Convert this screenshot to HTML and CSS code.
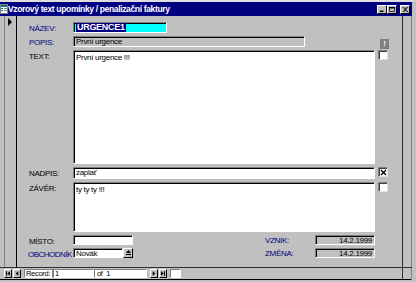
FILE: index.html
```html
<!DOCTYPE html>
<html lang="cs">
<head>
    <meta charset="UTF-8">
    <title>Vzorový text upomínky / penalizační faktury</title>
    <link rel="stylesheet" href="styles.css">
</head>
<body>
    <div class="window">
        <div class="titlebar">
            <svg class="app-icon" width="8" height="10" viewBox="0 0 8 10">
                <rect x="0.5" y="0.5" width="7" height="9" fill="#fff" stroke="#808080"/>
                <rect x="1" y="1" width="6" height="2" fill="#008080"/>
                <rect x="1" y="4" width="2" height="1" fill="#008080"/>
                <rect x="4" y="4" width="3" height="1" fill="#808080"/>
                <rect x="1" y="6" width="2" height="1" fill="#008080"/>
                <rect x="4" y="6" width="3" height="1" fill="#808080"/>
            </svg>
            <span class="title">Vzorový text upomínky / penalizační faktury</span>
            <div class="caption-buttons">
                <span class="cap-btn">
                    <svg width="8" height="7" viewBox="0 0 8 7"><rect x="1" y="5" width="5" height="2" fill="#000"/></svg>
                </span>
                <span class="cap-btn">
                    <svg width="8" height="7" viewBox="0 0 8 7"><rect x="0.5" y="0.5" width="7" height="6" fill="none" stroke="#000"/><rect x="0" y="0" width="8" height="2" fill="#000"/></svg>
                </span>
                <span class="cap-btn close">
                    <svg width="8" height="7" viewBox="0 0 8 7"><path d="M1 0 L7 7 M7 0 L1 7 M2 0 L8 7 M8 0 L2 7" stroke="#000" stroke-width="1"/></svg>
                </span>
            </div>
        </div>

        <div class="client">
            <div class="form-row">
                <div class="selector">
                    <div class="selector-col"><span class="current-record"></span></div>
                </div>

                <div class="detail">
                    <span class="label blue">NÁZEV:</span>
                    <div class="field"><div class="box cyan name-box"><span class="selected">URGENCE1</span></div></div>
                    <span class="extra"></span>

                    <span class="label blue">POPIS:</span>
                    <div class="field"><div class="box locked popis-box">První urgence</div></div>
                    <span class="extra"><span class="warn-btn">!</span></span>

                    <span class="label">TEXT:</span>
                    <div class="field"><div class="box tall">První urgence !!!</div></div>
                    <span class="extra"><span class="check"></span></span>

                    <span class="label">NADPIS:</span>
                    <div class="field"><div class="box">zaplať</div></div>
                    <span class="extra">
                        <span class="check">
                            <svg width="7" height="7" viewBox="0 0 7 7"><path d="M1 1 L6 6 M6 1 L1 6" stroke="#000" stroke-width="1.4"/></svg>
                        </span>
                    </span>

                    <span class="label">ZÁVĚR:</span>
                    <div class="field"><div class="box tall">ty ty ty !!!</div></div>
                    <span class="extra"><span class="check"></span></span>

                    <span class="label">MÍSTO:</span>
                    <div class="field split">
                        <div class="box small-box"></div>
                        <span class="label side-label blue">VZNIK:</span>
                        <div class="box locked date-box">14.2.1999</div>
                    </div>
                    <span class="extra"></span>

                    <span class="label blue long">OBCHODNÍK</span>
                    <div class="field split">
                        <div class="combo">
                            <div class="box combo-box">Novák</div>
                            <span class="combo-btn">
                                <svg width="5" height="6" viewBox="0 0 5 6"><path d="M0 3 L5 3 L2.5 0 Z" fill="#000"/><rect x="0" y="4" width="5" height="1" fill="#000"/></svg>
                            </span>
                        </div>
                        <span class="label side-label blue">ZMĚNA:</span>
                        <div class="box locked date-box">14.2.1999</div>
                    </div>
                    <span class="extra"></span>
                </div>

                <div class="side"></div>
            </div>

            <div class="nav-row">
                <div class="navbar">
                    <span class="nav-btn">
                        <svg width="6" height="7" viewBox="0 0 6 7"><rect x="0" y="0" width="1.5" height="7" fill="#000"/><path d="M6 0 L2 3.5 L6 7 Z" fill="#000"/></svg>
                    </span>
                    <span class="nav-btn">
                        <svg width="6" height="7" viewBox="0 0 6 7"><path d="M5 0 L1 3.5 L5 7 Z" fill="#000"/></svg>
                    </span>
                    <span class="nav-field record-label">Record:</span>
                    <span class="nav-field record-num">1</span>
                    <span class="nav-field record-count">of &nbsp;1</span>
                    <span class="nav-btn">
                        <svg width="6" height="7" viewBox="0 0 6 7"><path d="M1 0 L5 3.5 L1 7 Z" fill="#000"/></svg>
                    </span>
                    <span class="nav-btn">
                        <svg width="6" height="7" viewBox="0 0 6 7"><path d="M0 0 L4 3.5 L0 7 Z" fill="#000"/><rect x="4.5" y="0" width="1.5" height="7" fill="#000"/></svg>
                    </span>
                    <span class="nav-field new-record"></span>
                </div>
                <div class="nav-side"></div>
            </div>
        </div>
    </div>
</body>
</html>
```

FILE: styles.css
```css
* {
    margin: 0;
    padding: 0;
    box-sizing: border-box;
}

body {
    background-color: #c0c0c0;
    width: 416px;
    height: 282px;
    overflow: hidden;
    font-family: "Liberation Sans", Arial, sans-serif;
    font-size: 8px;
    letter-spacing: -0.3px;
    color: #000;
}

.window {
    width: 416px;
    height: 282px;
    background-color: #c0c0c0;
    border-top: 2px solid #dfdfdf;
    border-right: 4px solid #c0c0c0;
    border-bottom: 2px solid #c0c0c0;
    box-shadow: inset -1px 0 #808080, inset 0 -1px #000;
    display: flex;
    flex-direction: column;
}

/* title bar */

.titlebar {
    height: 14px;
    background-color: #000080;
    display: flex;
    align-items: center;
    color: #fff;
}

.app-icon {
    flex-shrink: 0;
}

.title {
    font-weight: bold;
    font-size: 8.5px;
    letter-spacing: -0.35px;
    white-space: nowrap;
    flex: 1;
}

.caption-buttons {
    display: flex;
    align-items: center;
    margin-right: 2px;
}

.cap-btn {
    width: 10px;
    height: 9px;
    background-color: #c0c0c0;
    border: 1px solid;
    border-color: #fff #000 #000 #fff;
    display: flex;
    align-items: center;
    justify-content: center;
}

.cap-btn svg {
    width: 6px;
    height: 5px;
}

.cap-btn.close {
    margin-left: 3px;
}

/* client area */

.client {
    flex: 1;
    display: flex;
    flex-direction: column;
}

.form-row {
    height: 252px;
    display: flex;
    border-bottom: 1px solid #303030;
}

.selector {
    width: 17px;
    padding-left: 4px;
    display: flex;
}

.selector-col {
    flex: 1;
    border-left: 1px solid #808080;
    border-right: 1px solid #000;
}

.current-record {
    display: block;
    width: 0;
    height: 0;
    margin: 2px 0 0 3px;
    border-left: 4px solid #000;
    border-top: 4px solid transparent;
    border-bottom: 4px solid transparent;
}

.detail {
    width: 386px;
    border-right: 1px solid #303030;
    padding-top: 6px;
    display: grid;
    grid-template-columns: 56px 302px 27px;
    grid-template-rows: 11px 11px 114px 12px 50px 10px 10px;
    row-gap: 3px;
    align-content: start;
}

.side {
    flex: 1;
}

.label {
    padding: 3px 0 0 12px;
    line-height: 8px;
    white-space: nowrap;
    color: #000;
}

.label.blue {
    color: #000080;
}

.label.long {
    padding-left: 11px;
    letter-spacing: -0.5px;
}

.field {
    display: flex;
}

.box {
    height: 100%;
    background-color: #fff;
    border: 1px solid;
    border-color: #808080 #fff #fff #808080;
    box-shadow: inset 1px 1px #000;
    padding: 0 2px;
    line-height: 9px;
    white-space: nowrap;
    overflow: hidden;
    flex: 1;
}

.box.tall {
    padding-top: 2px;
}

.box.cyan {
    background-color: #00ffff;
}

.name-box {
    flex: 0 0 94px;
}

.selected {
    background-color: #000080;
    color: #fff;
    font-weight: bold;
    font-size: 9px;
    padding: 0 1px;
}

.box.locked {
    background-color: #c0c0c0;
}

.popis-box {
    flex: 0 0 232px;
}

.extra {
    padding-left: 3px;
    display: flex;
    align-items: flex-start;
}

.check {
    width: 10px;
    height: 10px;
    background-color: #fff;
    border: 1px solid;
    border-color: #808080 #dfdfdf #dfdfdf #808080;
    box-shadow: inset 1px 1px #404040;
    display: flex;
    align-items: center;
    justify-content: center;
}

.warn-btn {
    width: 9px;
    height: 10px;
    margin: 3px 0 0 2px;
    background-color: #808080;
    color: #fff;
    font-weight: bold;
    font-size: 8px;
    line-height: 10px;
    text-align: center;
}

.field.split {
    align-items: stretch;
}

.small-box {
    flex: 0 0 60px;
}

.side-label {
    width: 50px;
    margin-left: 132px;
    padding-left: 0;
    padding-top: 2px;
}

.date-box {
    flex: 0 0 60px;
    text-align: right;
}

.combo {
    width: 60px;
    display: flex;
}

.combo-box {
    flex: 1;
}

.combo-btn {
    width: 10px;
    background-color: #c0c0c0;
    border: 1px solid;
    border-color: #fff #000 #000 #fff;
    display: flex;
    align-items: center;
    justify-content: center;
}

/* record navigation */

.nav-row {
    height: 12px;
    display: flex;
}

.navbar {
    width: 403px;
    border-right: 1px solid #303030;
    padding: 1px 0 0 4px;
    display: flex;
    align-items: flex-start;
}

.nav-side {
    flex: 1;
}

.nav-btn {
    width: 8px;
    height: 9px;
    margin-right: 1px;
    background-color: #c0c0c0;
    border: 1px solid;
    border-color: #fff #000 #000 #fff;
    display: flex;
    align-items: center;
    justify-content: center;
}

.nav-btn svg {
    width: 4px;
    height: 5px;
}

.nav-field {
    height: 9px;
    background-color: #fff;
    border: 1px solid;
    border-color: #808080 #fff #fff #808080;
    font-size: 7.5px;
    line-height: 7px;
    padding-left: 1px;
    white-space: nowrap;
}

.record-label {
    width: 29px;
    margin-left: 2px;
    border-right-color: #808080;
}

.record-num {
    width: 41px;
}

.record-count {
    width: 53px;
    margin-right: 3px;
    padding-left: 2px;
}

.new-record {
    width: 11px;
    margin-left: 2px;
}
```
